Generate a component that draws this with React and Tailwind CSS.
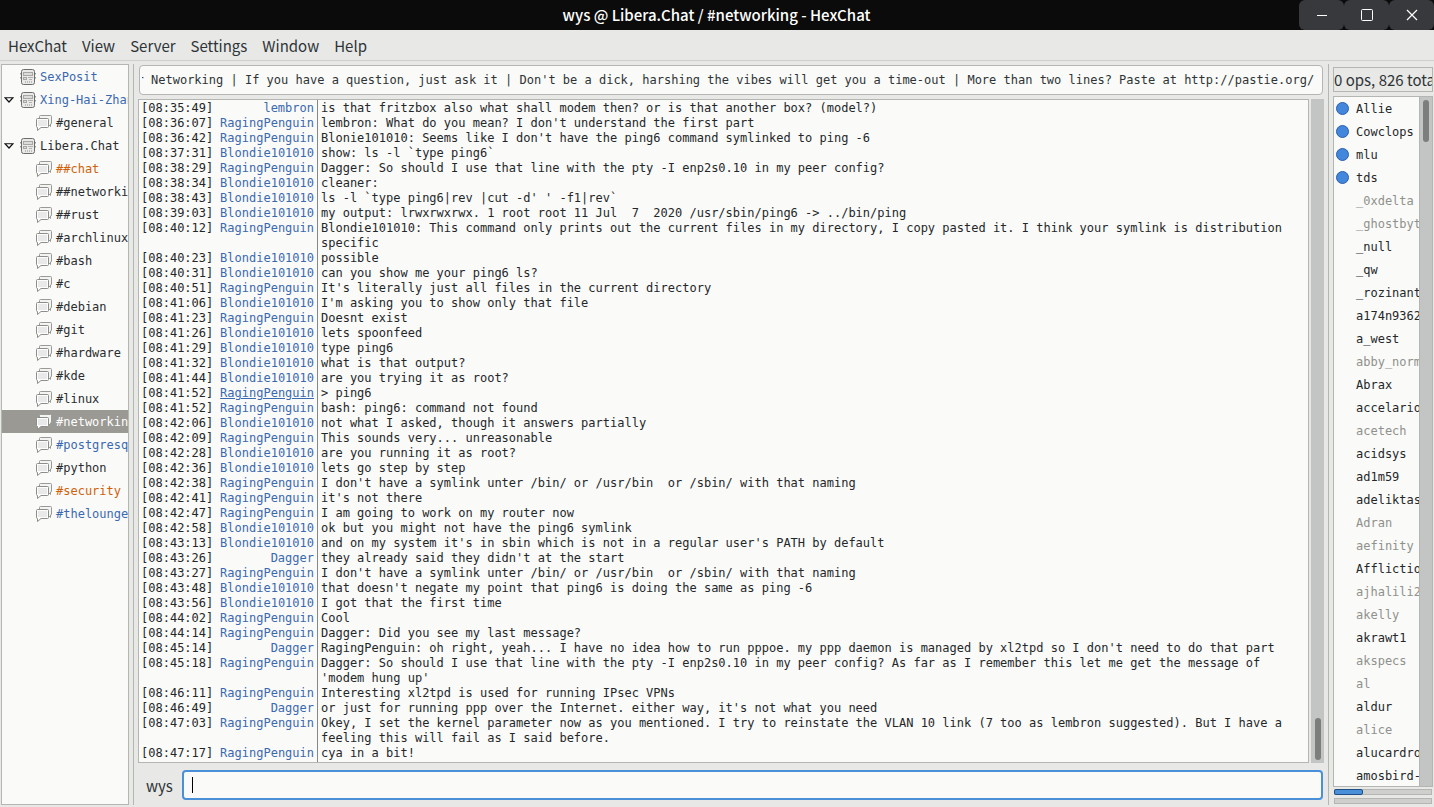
import { useEffect, useRef } from "react";

const tree = [
  { name: "SexPosit", type: "server", color: "text-[#3a69b0]" },
  { name: "Xing-Hai-Zhan", type: "server", open: true, color: "text-[#3a69b0]" },
  { name: "#general", type: "channel" },
  { name: "Libera.Chat", type: "server", open: true },
  { name: "##chat", type: "channel", color: "text-[#d0610a]" },
  { name: "##networking", type: "channel" },
  { name: "##rust", type: "channel" },
  { name: "#archlinux", type: "channel" },
  { name: "#bash", type: "channel" },
  { name: "#c", type: "channel" },
  { name: "#debian", type: "channel" },
  { name: "#git", type: "channel" },
  { name: "#hardware", type: "channel" },
  { name: "#kde", type: "channel" },
  { name: "#linux", type: "channel" },
  { name: "#networking", type: "channel", selected: true },
  { name: "#postgresql", type: "channel", color: "text-[#3a69b0]" },
  { name: "#python", type: "channel" },
  { name: "#security", type: "channel", color: "text-[#d0610a]" },
  { name: "#thelounge", type: "channel", color: "text-[#3a69b0]" },
];

const RP = "RagingPenguin";
const BL = "Blondie101010";

const messages = [
  ["08:35:49", "lembron", "is that fritzbox also what shall modem then? or is that another box? (model?)"],
  ["08:36:07", RP, "lembron: What do you mean? I don't understand the first part"],
  ["08:36:42", RP, "Blonie101010: Seems like I don't have the ping6 command symlinked to ping -6"],
  ["08:37:31", BL, "show: ls -l `type ping6`"],
  ["08:38:29", RP, "Dagger: So should I use that line with the pty -I enp2s0.10 in my peer config?"],
  ["08:38:34", BL, "cleaner:"],
  ["08:38:43", BL, "ls -l `type ping6|rev |cut -d' ' -f1|rev`"],
  ["08:39:03", BL, "my output: lrwxrwxrwx. 1 root root 11 Jul  7  2020 /usr/sbin/ping6 -> ../bin/ping"],
  ["08:40:12", RP, "Blondie101010: This command only prints out the current files in my directory, I copy pasted it. I think your symlink is distribution specific"],
  ["08:40:23", BL, "possible"],
  ["08:40:31", BL, "can you show me your ping6 ls?"],
  ["08:40:51", RP, "It's literally just all files in the current directory"],
  ["08:41:06", BL, "I'm asking you to show only that file"],
  ["08:41:23", RP, "Doesnt exist"],
  ["08:41:26", BL, "lets spoonfeed"],
  ["08:41:29", BL, "type ping6"],
  ["08:41:32", BL, "what is that output?"],
  ["08:41:44", BL, "are you trying it as root?"],
  ["08:41:52", RP, "> ping6", true],
  ["08:41:52", RP, "bash: ping6: command not found"],
  ["08:42:06", BL, "not what I asked, though it answers partially"],
  ["08:42:09", RP, "This sounds very... unreasonable"],
  ["08:42:28", BL, "are you running it as root?"],
  ["08:42:36", BL, "lets go step by step"],
  ["08:42:38", RP, "I don't have a symlink unter /bin/ or /usr/bin  or /sbin/ with that naming"],
  ["08:42:41", RP, "it's not there"],
  ["08:42:47", RP, "I am going to work on my router now"],
  ["08:42:58", BL, "ok but you might not have the ping6 symlink"],
  ["08:43:13", BL, "and on my system it's in sbin which is not in a regular user's PATH by default"],
  ["08:43:26", "Dagger", "they already said they didn't at the start"],
  ["08:43:27", RP, "I don't have a symlink unter /bin/ or /usr/bin  or /sbin/ with that naming"],
  ["08:43:48", BL, "that doesn't negate my point that ping6 is doing the same as ping -6"],
  ["08:43:56", BL, "I got that the first time"],
  ["08:44:02", RP, "Cool"],
  ["08:44:14", RP, "Dagger: Did you see my last message?"],
  ["08:45:14", "Dagger", "RagingPenguin: oh right, yeah... I have no idea how to run pppoe. my ppp daemon is managed by xl2tpd so I don't need to do that part"],
  ["08:45:18", RP, "Dagger: So should I use that line with the pty -I enp2s0.10 in my peer config? As far as I remember this let me get the message of 'modem hung up'"],
  ["08:46:11", RP, "Interesting xl2tpd is used for running IPsec VPNs"],
  ["08:46:49", "Dagger", "or just for running ppp over the Internet. either way, it's not what you need"],
  ["08:47:03", RP, "Okey, I set the kernel parameter now as you mentioned. I try to reinstate the VLAN 10 link (7 too as lembron suggested). But I have a feeling this will fail as I said before."],
  ["08:47:17", RP, "cya in a bit!"],
];

const users = [
  { name: "Allie", voice: true },
  { name: "Cowclops", voice: true },
  { name: "mlu", voice: true },
  { name: "tds", voice: true },
  { name: "_0xdelta", away: true },
  { name: "_ghostbyt", away: true },
  { name: "_null" },
  { name: "_qw" },
  { name: "_rozinant" },
  { name: "a174n9362" },
  { name: "a_west" },
  { name: "abby_norm", away: true },
  { name: "Abrax" },
  { name: "accelario" },
  { name: "acetech", away: true },
  { name: "acidsys" },
  { name: "ad1m59" },
  { name: "adeliktas" },
  { name: "Adran", away: true },
  { name: "aefinity", away: true },
  { name: "Afflictio" },
  { name: "ajhalili2", away: true },
  { name: "akelly", away: true },
  { name: "akrawt1" },
  { name: "akspecs", away: true },
  { name: "al", away: true },
  { name: "aldur" },
  { name: "alice", away: true },
  { name: "alucardro" },
  { name: "amosbird-" },
];

const topic =
  "Computer Networking | If you have a question, just ask it | Don't be a dick, harshing the vibes will get you a time-out | More than two lines? Paste at http://pastie.org/";

function ServerIcon() {
  return (
    <svg aria-hidden="true" viewBox="0 0 16 16" className="h-4 w-4 shrink-0">
      <path d="M0.5 4v1.500M0.5 8v1.500M15.5 4v1.500M15.5 8v1.500" stroke="#9a9c98" />
      <rect x="1.5" y="0.5" width="13" height="15" rx="2" fill="#e9e9e7" stroke="#6c6e6b" />
      <rect x="3.5" y="3.5" width="9" height="3" fill="#dcdddb" stroke="#a6a8a4" />
      <rect x="3.5" y="8.5" width="3" height="2" fill="#dcdddb" stroke="#a6a8a4" />
      <path d="M8 8.500h5M9 10.500h3" stroke="#b0b2ae" />
      <path d="M5.5 12v2M7.5 12v2M9.5 12v2M11.5 12v2" stroke="#bcbeba" />
    </svg>
  );
}

function ChannelIcon() {
  return (
    <svg aria-hidden="true" viewBox="0 0 16 16" className="h-4 w-4 shrink-0">
      <path
        d="M4.500 0.500h10a1 1 0 0 1 1 1v6.500a1 1 0 0 1-1 1v2.500l-2.500-2.500H4.500a1 1 0 0 1-1-1v-6.500a1 1 0 0 1 1-1z"
        fill="#f4f4f3"
        stroke="#989a96"
      />
      <path
        d="M1.500 3.500h10a1 1 0 0 1 1 1v7a1 1 0 0 1-1 1H5L1.500 15.500v-3a1 1 0 0 1-1-1v-7a1 1 0 0 1 1-1z"
        fill="#fdfdfd"
        stroke="#8c8e8a"
      />
      <rect x="2" y="5" width="9" height="6" fill="#e9e9ea" />
    </svg>
  );
}

function ChannelTree() {
  return (
    <aside className="w-32 shrink-0 overflow-hidden border border-[#b4b6b2] bg-[#fafaf8]">
      <ul>
        {tree.map((item) => (
          <li key={item.name}>
            <button
              type="button"
              className={`flex h-[23px] w-full items-center overflow-hidden whitespace-pre ${
                item.selected ? "bg-[#9a9993] text-white" : item.color || "text-[#2a2d30]"
              } ${item.type === "channel" ? "gap-1 pl-[34px]" : "gap-1 pl-[2px]"}`}
            >
              {item.type === "server" && (
                <span className="w-[12px] shrink-0">
                  {item.open && (
                    <svg aria-hidden="true" viewBox="0 0 10 6" className="h-[6px] w-[10px]">
                      <path d="M1 0.750h8L5 5z" fill="#fff" stroke="#111" strokeWidth="1.200" />
                    </svg>
                  )}
                </span>
              )}
              {item.type === "server" ? <ServerIcon /> : <ChannelIcon />}
              <span>{item.name}</span>
            </button>
          </li>
        ))}
      </ul>
    </aside>
  );
}

function MessageLog() {
  return (
    <div className="flex min-h-0 flex-1 gap-[2px]">
      <ol className="flex min-w-0 flex-1 flex-col overflow-hidden border border-[#b4b6b2] bg-[#fafaf8] leading-[15px] text-[#24272a]">
        <li aria-hidden="true" className="h-px w-[179px] shrink-0 border-r border-[#85878a]" />
        {messages.map(([time, nick, text, marked], i) => (
          <li key={i} className="flex shrink-0">
            <div className="flex w-[179px] shrink-0 justify-between border-r border-[#85878a] pr-[3px] pl-[2px]">
              <time>[{time}]</time>
              <span className={marked ? "text-[#3a69b0] underline" : "text-[#3a69b0]"}>
                {nick}
              </span>
            </div>
            <p className="min-w-0 flex-1 pl-[3px] whitespace-pre-wrap">{text}</p>
          </li>
        ))}
        <li aria-hidden="true" className="w-[179px] flex-1 border-r border-[#85878a]" />
      </ol>
      <div className="flex w-[13px] shrink-0 flex-col items-center justify-end bg-[#c3c5c4] pb-[3px]">
        <div className="h-[42px] w-[6px] rounded-full bg-[#7b7e7d]" />
      </div>
    </div>
  );
}

function UserList() {
  return (
    <aside className="flex w-[100px] shrink-0 flex-col pt-[3px]">
      <div className="h-[25px] overflow-hidden border border-[#b4b6b2] font-['Noto_Sans_CJK_SC',sans-serif] text-[15px] leading-[24px] whitespace-nowrap">
        0 ops, 826 total
      </div>
      <div className="mt-1 flex min-h-0 flex-1 border border-[#b4b6b2] bg-[#fafaf8]">
        <ul className="min-w-0 flex-1 overflow-hidden">
          {users.map((user) => (
            <li
              key={user.name}
              className={`flex h-[23px] items-center gap-[7px] pl-[2px] whitespace-pre ${
                user.away ? "text-[#8f918d]" : "text-[#24272a]"
              }`}
            >
              <span
                className={`h-[13px] w-[13px] shrink-0 rounded-full ${
                  user.voice ? "border border-[#2a5fb0] bg-[#4287dc]" : ""
                }`}
              />
              {user.name}
            </li>
          ))}
        </ul>
        <div className="w-[13px] shrink-0 border-l border-[#b4b6b2] bg-[#c3c5c4] pt-[3px] pl-[3px]">
          <div className="h-[42px] w-[6px] rounded-full bg-[#7b7e7d]" />
        </div>
      </div>
      <div className="mx-px mt-[2px] h-[6px] border border-[#b4b6b2] bg-[#cfd0ce]">
        <div className="-m-px h-[6px] w-[29px] rounded-xs border border-[#1f4f86] bg-[#4a90d9]" />
      </div>
      <div className="mx-px mt-[3px] mb-px h-[6px] border border-[#b4b6b2] bg-[#cfd0ce]" />
    </aside>
  );
}

export default function App() {
  const topicRef = useRef(null);

  // keep the end of a long topic in view
  useEffect(() => {
    topicRef.current.scrollLeft = topicRef.current.scrollWidth;
  }, []);

  return (
    <div className="flex h-screen flex-col overflow-hidden bg-[#e8e8e7] font-['DejaVu_Sans_Mono',monospace] text-xs text-[#2e3436]">
      <header className="flex h-[30px] shrink-0 bg-[#0b0b0b] font-['Noto_Sans_CJK_SC',sans-serif] text-white">
        <h1 className="flex-1 pl-[134px] text-center text-[15px] leading-[30px] font-medium">
          wys @ Libera.Chat / #networking - HexChat
        </h1>
        <div className="flex">
          <button
            type="button"
            aria-label="Minimize"
            className="flex w-[45px] items-center justify-center rounded-md bg-[#38393d]"
          >
            <svg viewBox="0 0 12 12" className="h-3 w-3">
              <path d="M1 6.500h10" stroke="#fff" />
            </svg>
          </button>
          <button
            type="button"
            aria-label="Maximize"
            className="flex w-[45px] items-center justify-center rounded-md bg-[#38393d]"
          >
            <svg viewBox="0 0 12 12" className="h-3 w-3">
              <rect x="0.5" y="0.5" width="11" height="11" rx="1" fill="none" stroke="#fff" />
            </svg>
          </button>
          <button
            type="button"
            aria-label="Close"
            className="flex w-[45px] items-center justify-center rounded-md bg-[#38393d]"
          >
            <svg viewBox="0 0 12 12" className="h-3 w-3">
              <path d="M1 1l10 10M11 1L1 11" stroke="#fff" strokeWidth="1.200" />
            </svg>
          </button>
        </div>
      </header>

      <nav className="flex h-[31px] shrink-0 items-center gap-[15px] border-b border-[#cfd0ce] px-2 pt-px font-['Noto_Sans_CJK_SC',sans-serif] text-[15px]">
        <button type="button">HexChat</button>
        <button type="button">View</button>
        <button type="button">Server</button>
        <button type="button">Settings</button>
        <button type="button">Window</button>
        <button type="button">Help</button>
      </nav>

      <div className="flex min-h-0 flex-1 gap-1 px-px pt-[3px] pb-[2px]">
        <ChannelTree />
        <div className="w-px shrink-0 bg-[#b4b6b2]" />
        <main className="flex min-w-0 flex-1 flex-col pt-px">
          <input
            ref={topicRef}
            aria-label="Topic"
            defaultValue={topic}
            className="mx-px mb-1 h-[30px] shrink-0 rounded-sm border border-[#b4b6b2] bg-[#fafaf8] pr-2 pl-[2px] outline-none"
          />
          <MessageLog />
          <div className="mt-[7px] mb-[5px] flex h-[30px] shrink-0 items-center">
            <label
              htmlFor="message"
              className="w-11 pt-px pl-2 font-['Noto_Sans_CJK_SC',sans-serif] text-[15px]"
            >
              wys
            </label>
            <div className="mr-px flex h-full flex-1 items-center rounded-sm border-2 border-[#4a90d9] bg-[#fafaf8] pl-2">
              <span className="h-4 w-px bg-black" />
              <input id="message" className="min-w-0 flex-1 bg-transparent outline-none" />
            </div>
          </div>
        </main>
        <div className="w-px shrink-0 bg-[#b4b6b2]" />
        <UserList />
      </div>
    </div>
  );
}
